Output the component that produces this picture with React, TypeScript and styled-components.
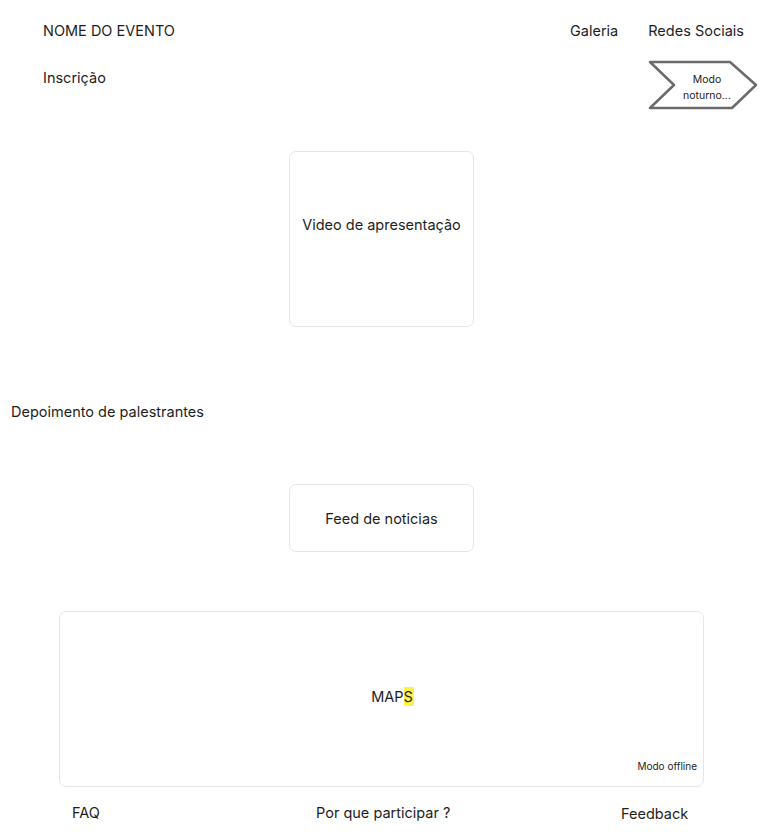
import React from 'react';
import styled, {createGlobalStyle} from 'styled-components';

const GlobalStyle = createGlobalStyle`
  html, body {
    margin: 0;
    padding: 0;
    background: #ffffff;
  }
  body {
    font-family: Inter, "Noto Sans", "Liberation Sans", sans-serif;
    color: #1e1e1e;
    font-size: 14.5px;
    line-height: 17px;
  }
`;

const Page = styled.div`
  width: 761px;
  min-height: 832px;
  display: flex;
  flex-direction: column;
`;

const TopRow = styled.div`
  display: flex;
  justify-content: space-between;
  align-items: center;
  padding: 22px 17px 0 43px;
`;

const Nav = styled.nav`
  display: flex;
  gap: 30px;
`;

const NavItem = styled.span`
  white-space: nowrap;
`;

const SecondRow = styled.div`
  display: flex;
  justify-content: space-between;
  align-items: flex-start;
  margin-top: 21px;
  padding: 0 3px 0 43px;
`;

const Signup = styled.span`
  margin-top: 9px;
`;

const ToggleShape = styled.div`
  position: relative;
  width: 112px;
  height: 50px;
`;

const ToggleLabel = styled.span`
  position: absolute;
  left: 24px;
  right: 14px;
  top: 12px;
  text-align: center;
  font-size: 10.5px;
  line-height: 16px;
  color: #1e1e1e;
`;

const Card = styled.div<{ $width: number; $height: number; $padTop?: number }>`
  box-sizing: border-box;
  width: ${p => p.$width}px;
  height: ${p => p.$height}px;
  border: 1.5px solid #e6e6e6;
  border-radius: 7px;
  background: #ffffff;
  display: flex;
  justify-content: center;
  align-items: ${p => (p.$padTop ? 'flex-start' : 'center')};
  padding-top: ${p => p.$padTop || 0}px;
  text-align: center;
`;

const Centered = styled.div<{ $top: number }>`
  display: flex;
  justify-content: center;
  margin-top: ${p => p.$top}px;
  padding-left: 2px;
`;

const SectionTitle = styled.div`
  margin-top: 76px;
  padding-left: 11px;
`;

const MapWrap = styled.div`
  margin: 59px 0 0 59px;
`;

const MapCard = styled.div`
  position: relative;
  box-sizing: border-box;
  width: 645px;
  height: 176px;
  border: 1.5px solid #e6e6e6;
  border-radius: 7px;
  display: flex;
  justify-content: center;
  align-items: center;
  padding: 0 0 5px 22px;
`;

const Highlight = styled.span`
  background: #fff24a;
  padding: 1px 1px 1px 0;
`;

const OfflineNote = styled.span`
  position: absolute;
  right: 6px;
  bottom: 14px;
  font-size: 10px;
  line-height: 12px;
`;

const Footer = styled.footer`
  display: grid;
  grid-template-columns: 244px 305px auto;
  margin-top: 17px;
  padding-left: 72px;
`;

const FooterLink = styled.span<{ $offset?: number }>`
  margin-top: ${p => p.$offset || 0}px;
  white-space: nowrap;
`;

function NightToggle() {
    return (
        <ToggleShape>
            <svg width="112" height="50" viewBox="0 0 112 50">
                <path
                    d="M4 2 L84 2 L110 25 L86 48 L4 48 L28 25 Z"
                    fill="none"
                    stroke="#6b6b6b"
                    strokeWidth="2.5"
                    strokeLinejoin="round"
                />
            </svg>
            <ToggleLabel>Modo<br/>noturno...</ToggleLabel>
        </ToggleShape>
    );
}

export default function App() {
    return (
        <Page>
            <GlobalStyle/>
            <TopRow>
                <span>NOME DO EVENTO</span>
                <Nav>
                    <NavItem>Galeria</NavItem>
                    <NavItem>Redes Sociais</NavItem>
                </Nav>
            </TopRow>
            <SecondRow>
                <Signup>Inscrição</Signup>
                <NightToggle/>
            </SecondRow>
            <Centered $top={41}>
                <Card $width={185} $height={176} $padTop={64}>Video de apresentação</Card>
            </Centered>
            <SectionTitle>Depoimento de palestrantes</SectionTitle>
            <Centered $top={64}>
                <Card $width={185} $height={68}>Feed de noticias</Card>
            </Centered>
            <MapWrap>
                <MapCard>
                    <span>MAP<Highlight>S</Highlight></span>
                    <OfflineNote>Modo offline</OfflineNote>
                </MapCard>
            </MapWrap>
            <Footer>
                <FooterLink>FAQ</FooterLink>
                <FooterLink>Por que participar ?</FooterLink>
                <FooterLink $offset={1}>Feedback</FooterLink>
            </Footer>
        </Page>
    );
}
